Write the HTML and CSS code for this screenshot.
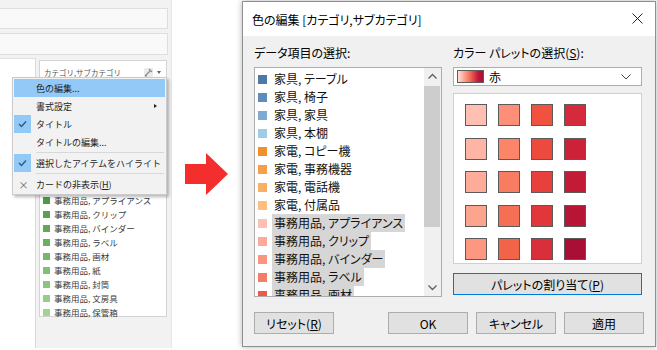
FILE: index.html
```html
<!DOCTYPE html>
<html>
	<head>
		<meta charset="utf-8" />
		<title>色の編集</title>
		<link rel="stylesheet" href="styles.css">
	</head>
	<body>
		<!-- Tableau side panel with context menu -->
		<section class="workbook">
			<div class="shelf"></div>
			<div class="shelf tall"></div>
			<div class="lower">
				<div class="sheet"></div>
				<div class="side">
					<div class="card">
						<div class="card-head">
							<span class="card-title">カテゴリ,サブカテゴリ</span>
							<span class="card-tools">
								<svg class="pen" width="9" height="9" viewBox="0 0 9 9"><path d="M1 8 L7 2 M5 1 L8 4 M1 8 L3 8" stroke="#8a8a8a" stroke-width="1.2" fill="none"/></svg>
								<span class="caret"></span>
							</span>
						</div>
						<!-- items above are covered by the menu -->
						<ul class="legend">
							<li><i style="background:#4f9a44"></i>事務用品, アプライアンス</li>
							<li><i style="background:#59a14f"></i>事務用品, クリップ</li>
							<li><i style="background:#63a858"></i>事務用品, バインダー</li>
							<li><i style="background:#6daf62"></i>事務用品, ラベル</li>
							<li><i style="background:#77b76c"></i>事務用品, 画材</li>
							<li><i style="background:#81be76"></i>事務用品, 紙</li>
							<li><i style="background:#8cc581"></i>事務用品, 封筒</li>
							<li><i style="background:#97cc8b"></i>事務用品, 文房具</li>
							<li><i style="background:#a1d396"></i>事務用品, 保管箱</li>
						</ul>
					</div>
				</div>
			</div>

			<div class="menu">
				<div class="menu-item active"><span class="mark"></span><span>色の編集...</span></div>
				<div class="menu-item"><span class="mark"></span><span>書式設定</span><span class="sub"></span></div>
				<div class="menu-item"><span class="mark checked"><svg width="9" height="8" viewBox="0 0 9 8"><polyline points="1,4 3.5,6.5 8,1.5" fill="none" stroke="#34597e" stroke-width="1.4"/></svg></span><span>タイトル</span></div>
				<div class="menu-item"><span class="mark"></span><span>タイトルの編集...</span></div>
				<div class="menu-sep"></div>
				<div class="menu-item"><span class="mark checked"><svg width="9" height="8" viewBox="0 0 9 8"><polyline points="1,4 3.5,6.5 8,1.5" fill="none" stroke="#34597e" stroke-width="1.4"/></svg></span><span>選択したアイテムをハイライト</span></div>
				<div class="menu-sep"></div>
				<div class="menu-item"><span class="mark cross">×</span><span>カードの非表示(<u>H</u>)</span></div>
			</div>
		</section>

		<div class="gutter">
			<svg width="44" height="42" viewBox="0 0 44 42"><polygon points="0,11 21,11 21,0 43,21 21,42 21,31 0,31" fill="#f42d2d"/></svg>
		</div>

		<!-- Edit colors dialog -->
		<section class="dialog">
			<header class="titlebar">
				<span>色の編集 [カテゴリ,サブカテゴリ]</span>
				<svg class="close" width="11" height="11" viewBox="0 0 11 11"><path d="M0.5 0.5 L10.5 10.5 M10.5 0.5 L0.5 10.5" stroke="#222" stroke-width="1"/></svg>
			</header>
			<div class="dialog-body">
				<div class="columns">
					<div class="col">
						<label>データ項目の選択:</label>
						<div class="listbox">
							<ul class="items">
								<li><i style="background:#4e79a7"></i><span>家具, テーブル</span></li>
								<li><i style="background:#5f8cbd"></i><span>家具, 椅子</span></li>
								<li><i style="background:#7eaad6"></i><span>家具, 家具</span></li>
								<li><i style="background:#a0cbe8"></i><span>家具, 本棚</span></li>
								<li><i style="background:#f28e2b"></i><span>家電, コピー機</span></li>
								<li><i style="background:#f69e48"></i><span>家電, 事務機器</span></li>
								<li><i style="background:#faaf64"></i><span>家電, 電話機</span></li>
								<li><i style="background:#ffbe7d"></i><span>家電, 付属品</span></li>
								<li class="sel"><i style="background:#ffbfb2"></i><span>事務用品, アプライアンス</span></li>
								<li class="sel"><i style="background:#fdaa98"></i><span>事務用品, クリップ</span></li>
								<li class="sel"><i style="background:#fb9580"></i><span>事務用品, バインダー</span></li>
								<li class="sel"><i style="background:#f57d67"></i><span>事務用品, ラベル</span></li>
								<li class="sel"><i style="background:#ee5a48"></i><span>事務用品, 画材</span></li>
							</ul>
							<div class="scrollbar">
								<svg class="arrow" width="17" height="17" viewBox="0 0 17 17"><polyline points="4.5,10.5 8.5,6.5 12.5,10.5" fill="none" stroke="#606060" stroke-width="1.3"/></svg>
								<div class="thumb"></div>
								<div class="track"></div>
								<svg class="arrow" width="17" height="17" viewBox="0 0 17 17"><polyline points="4.5,6.5 8.5,10.5 12.5,6.5" fill="none" stroke="#606060" stroke-width="1.3"/></svg>
							</div>
						</div>
					</div>
					<div class="col">
						<label>カラー パレットの選択(<u>S</u>):</label>
						<div class="combo">
							<span class="ramp"></span>
							<span class="combo-text">赤</span>
							<svg class="chev" width="10" height="6" viewBox="0 0 10 6"><polyline points="0.5,0.5 5,5 9.5,0.5" fill="none" stroke="#444" stroke-width="1"/></svg>
						</div>
						<div class="palette">
							<i style="background:#ffbfb2"></i><i style="background:#fd8e78"></i><i style="background:#f0523f"></i><i style="background:#d62a3c"></i>
							<i style="background:#ffb5a6"></i><i style="background:#fb8569"></i><i style="background:#ec4a3f"></i><i style="background:#cb2139"></i>
							<i style="background:#feac9a"></i><i style="background:#f87c61"></i><i style="background:#e8413d"></i><i style="background:#c11b38"></i>
							<i style="background:#fda48f"></i><i style="background:#f56f55"></i><i style="background:#e1373b"></i><i style="background:#b71536"></i>
							<i style="background:#fc9782"></i><i style="background:#f2644a"></i><i style="background:#d92f3a"></i><i style="background:#a80f37"></i>
						</div>
						<button class="btn focus">パレットの割り当て(<u>P</u>)</button>
					</div>
				</div>
				<div class="actions">
					<button class="btn">リセット(<u>R</u>)</button>
					<span class="spacer"></span>
					<button class="btn">OK</button>
					<button class="btn">キャンセル</button>
					<button class="btn">適用</button>
				</div>
			</div>
		</section>
	</body>
</html>
```

FILE: styles.css
```css
* {
	padding: 0;
	margin: 0;
	box-sizing: border-box;
}

html, body {
	width: 657px;
	height: 350px;
	overflow: hidden;
}

body {
	display: flex;
	background: #fff;
	font-family: 'Noto Sans CJK JP', 'Noto Sans', sans-serif;
	color: #000;
}

ul {
	list-style: none;
}

/* Left: workbook panel */

.workbook {
	position: relative;
	width: 172px;
	height: 348px;
	padding-top: 8px;
	background: #f2f2f2;
	border-right: 1px solid #e6e6e6;
}

.shelf {
	height: 21px;
	width: 168px;
	margin-bottom: 4px;
	background: #f9f9f9;
	border: 1px solid #dedede;
	border-left: none;
}

.shelf.tall {
	height: 22px;
	margin-bottom: 3px;
}

.lower {
	display: flex;
	height: 290px;
}

.sheet {
	width: 36px;
	background: #fff;
	border-top: 1px solid #e0e0e0;
	border-right: 1px solid #dadada;
}

.side {
	flex: 1;
	padding: 2px 3px 0 3px;
}

.card {
	width: 128px;
	height: 257px;
	background: #fff;
	border: 1px solid #d4d4d4;
	padding: 0 3px;
	font-size: 8.5px;
	color: #3a3a3a;
}

.card-head {
	display: flex;
	align-items: center;
	justify-content: space-between;
	height: 20px;
	padding: 3px 0 0 1px;
	font-size: 7.5px;
	color: #555;
}

.card-tools {
	display: flex;
	align-items: center;
	gap: 4px;
	padding-right: 2px;
}

.pen {
	background: #ececec;
}

.caret {
	width: 0;
	height: 0;
	border-left: 2.5px solid transparent;
	border-right: 2.5px solid transparent;
	border-top: 3px solid #666;
}

.legend {
	padding-top: 112px;
}

.legend li {
	display: flex;
	align-items: center;
	height: 14px;
	white-space: nowrap;
}

.legend i {
	width: 7px;
	height: 7px;
	margin-right: 4px;
}

/* Context menu overlays the card */

.menu {
	position: absolute;
	left: 12px;
	top: 77px;
	width: 155px;
	padding: 1px;
	background: #f2f2f2;
	border: 1px solid #cbcbcb;
	box-shadow: 2px 2px 3px rgba(0, 0, 0, 0.28);
	font-size: 9px;
	color: #1e1e1e;
}

.menu-item {
	display: flex;
	align-items: center;
	height: 18px;
	white-space: nowrap;
}

.menu-item.active {
	background: #93c9f6;
}

.mark {
	display: flex;
	align-items: center;
	justify-content: center;
	width: 17px;
	height: 18px;
	margin-right: 5px;
}

.mark.checked {
	background: #93c9f6;
}

.mark.cross {
	color: #6a6a6a;
	font-size: 10px;
	padding-left: 2px;
}

.sub {
	margin-left: auto;
	margin-right: 8px;
	width: 0;
	height: 0;
	border-top: 2.5px solid transparent;
	border-bottom: 2.5px solid transparent;
	border-left: 3px solid #222;
}

.menu-sep {
	height: 3px;
	margin: 0 1px 0 22px;
	border-top: 1px solid #d8d8d8;
	transform: translateY(1px);
}

/* Arrow */

.gutter {
	width: 70px;
	display: flex;
	align-items: center;
	justify-content: center;
	padding: 0 0 3px 0;
}

/* Dialog */

.dialog {
	width: 414px;
	height: 346px;
	margin-top: 1px;
	border: 1px solid #8f8f8f;
	box-shadow: 0 0 6px rgba(0, 0, 0, 0.3);
	background: #f0f0f0;
	font-size: 12px;
	font-feature-settings: "palt";
}

.titlebar {
	display: flex;
	align-items: center;
	justify-content: space-between;
	height: 34px;
	padding: 0 12px 0 9px;
	background: #fff;
}

.close {
	margin-bottom: 1px;
}

.dialog-body {
	padding: 9px 11px 0 11px;
}

.columns {
	display: grid;
	grid-template-columns: 188px 189px;
	gap: 11px;
}

.col {
	display: flex;
	flex-direction: column;
}

label {
	display: block;
	height: 16px;
	line-height: 16px;
	margin-bottom: 6px;
}

.listbox {
	display: flex;
	height: 230px;
	background: #fff;
	border: 1px solid #adadad;
	overflow: hidden;
}

.items {
	flex: 1;
	padding-top: 2px;
}

.items li {
	display: flex;
	align-items: center;
	height: 18px;
	white-space: nowrap;
}

.items i {
	width: 9px;
	height: 9px;
	margin: 0 5px 0 3px;
}

.items span {
	padding: 0 2px;
	line-height: 18px;
	color: #111;
}

.items li.sel span {
	background: #d6d6d6;
}

.scrollbar {
	display: flex;
	flex-direction: column;
	width: 17px;
	background: #f0f0f0;
}

.thumb {
	height: 141px;
	margin: 1px 1px 0 0;
	background: #cdcdcd;
}

.track {
	flex: 1;
}

.combo {
	display: flex;
	align-items: center;
	height: 19px;
	padding: 0 10px 0 3px;
	background: #fff;
	border: 1px solid #adadad;
}

.ramp {
	width: 27px;
	height: 13px;
	margin-right: 5px;
	border: 1px solid #5c5c5c;
	background: linear-gradient(to right, #ffe0d8, #f7735c 45%, #c2183a 80%, #a50f35);
}

.combo-text {
	flex: 1;
}

.palette {
	display: grid;
	grid-template-columns: repeat(4, 22px);
	column-gap: 11px;
	row-gap: 8.75px;
	height: 171px;
	margin-top: 7px;
	padding: 10px 0 0 11px;
	background: #fff;
	border: 1px solid #d0d0d0;
}

.palette i {
	width: 22px;
	height: 22px;
	border: 1px solid #5a5a5a;
}

.btn {
	height: 22px;
	background: #e1e1e1;
	border: 1px solid #adadad;
	font-family: inherit;
	font-size: 12px;
	font-feature-settings: "palt";
	color: #000;
}

.btn.focus {
	margin-top: 9px;
	border-color: #0078d7;
}

.actions {
	display: flex;
	gap: 8px;
	margin-top: 15px;
}

.actions .btn {
	width: 80px;
}

.spacer {
	flex: 1;
}
```
